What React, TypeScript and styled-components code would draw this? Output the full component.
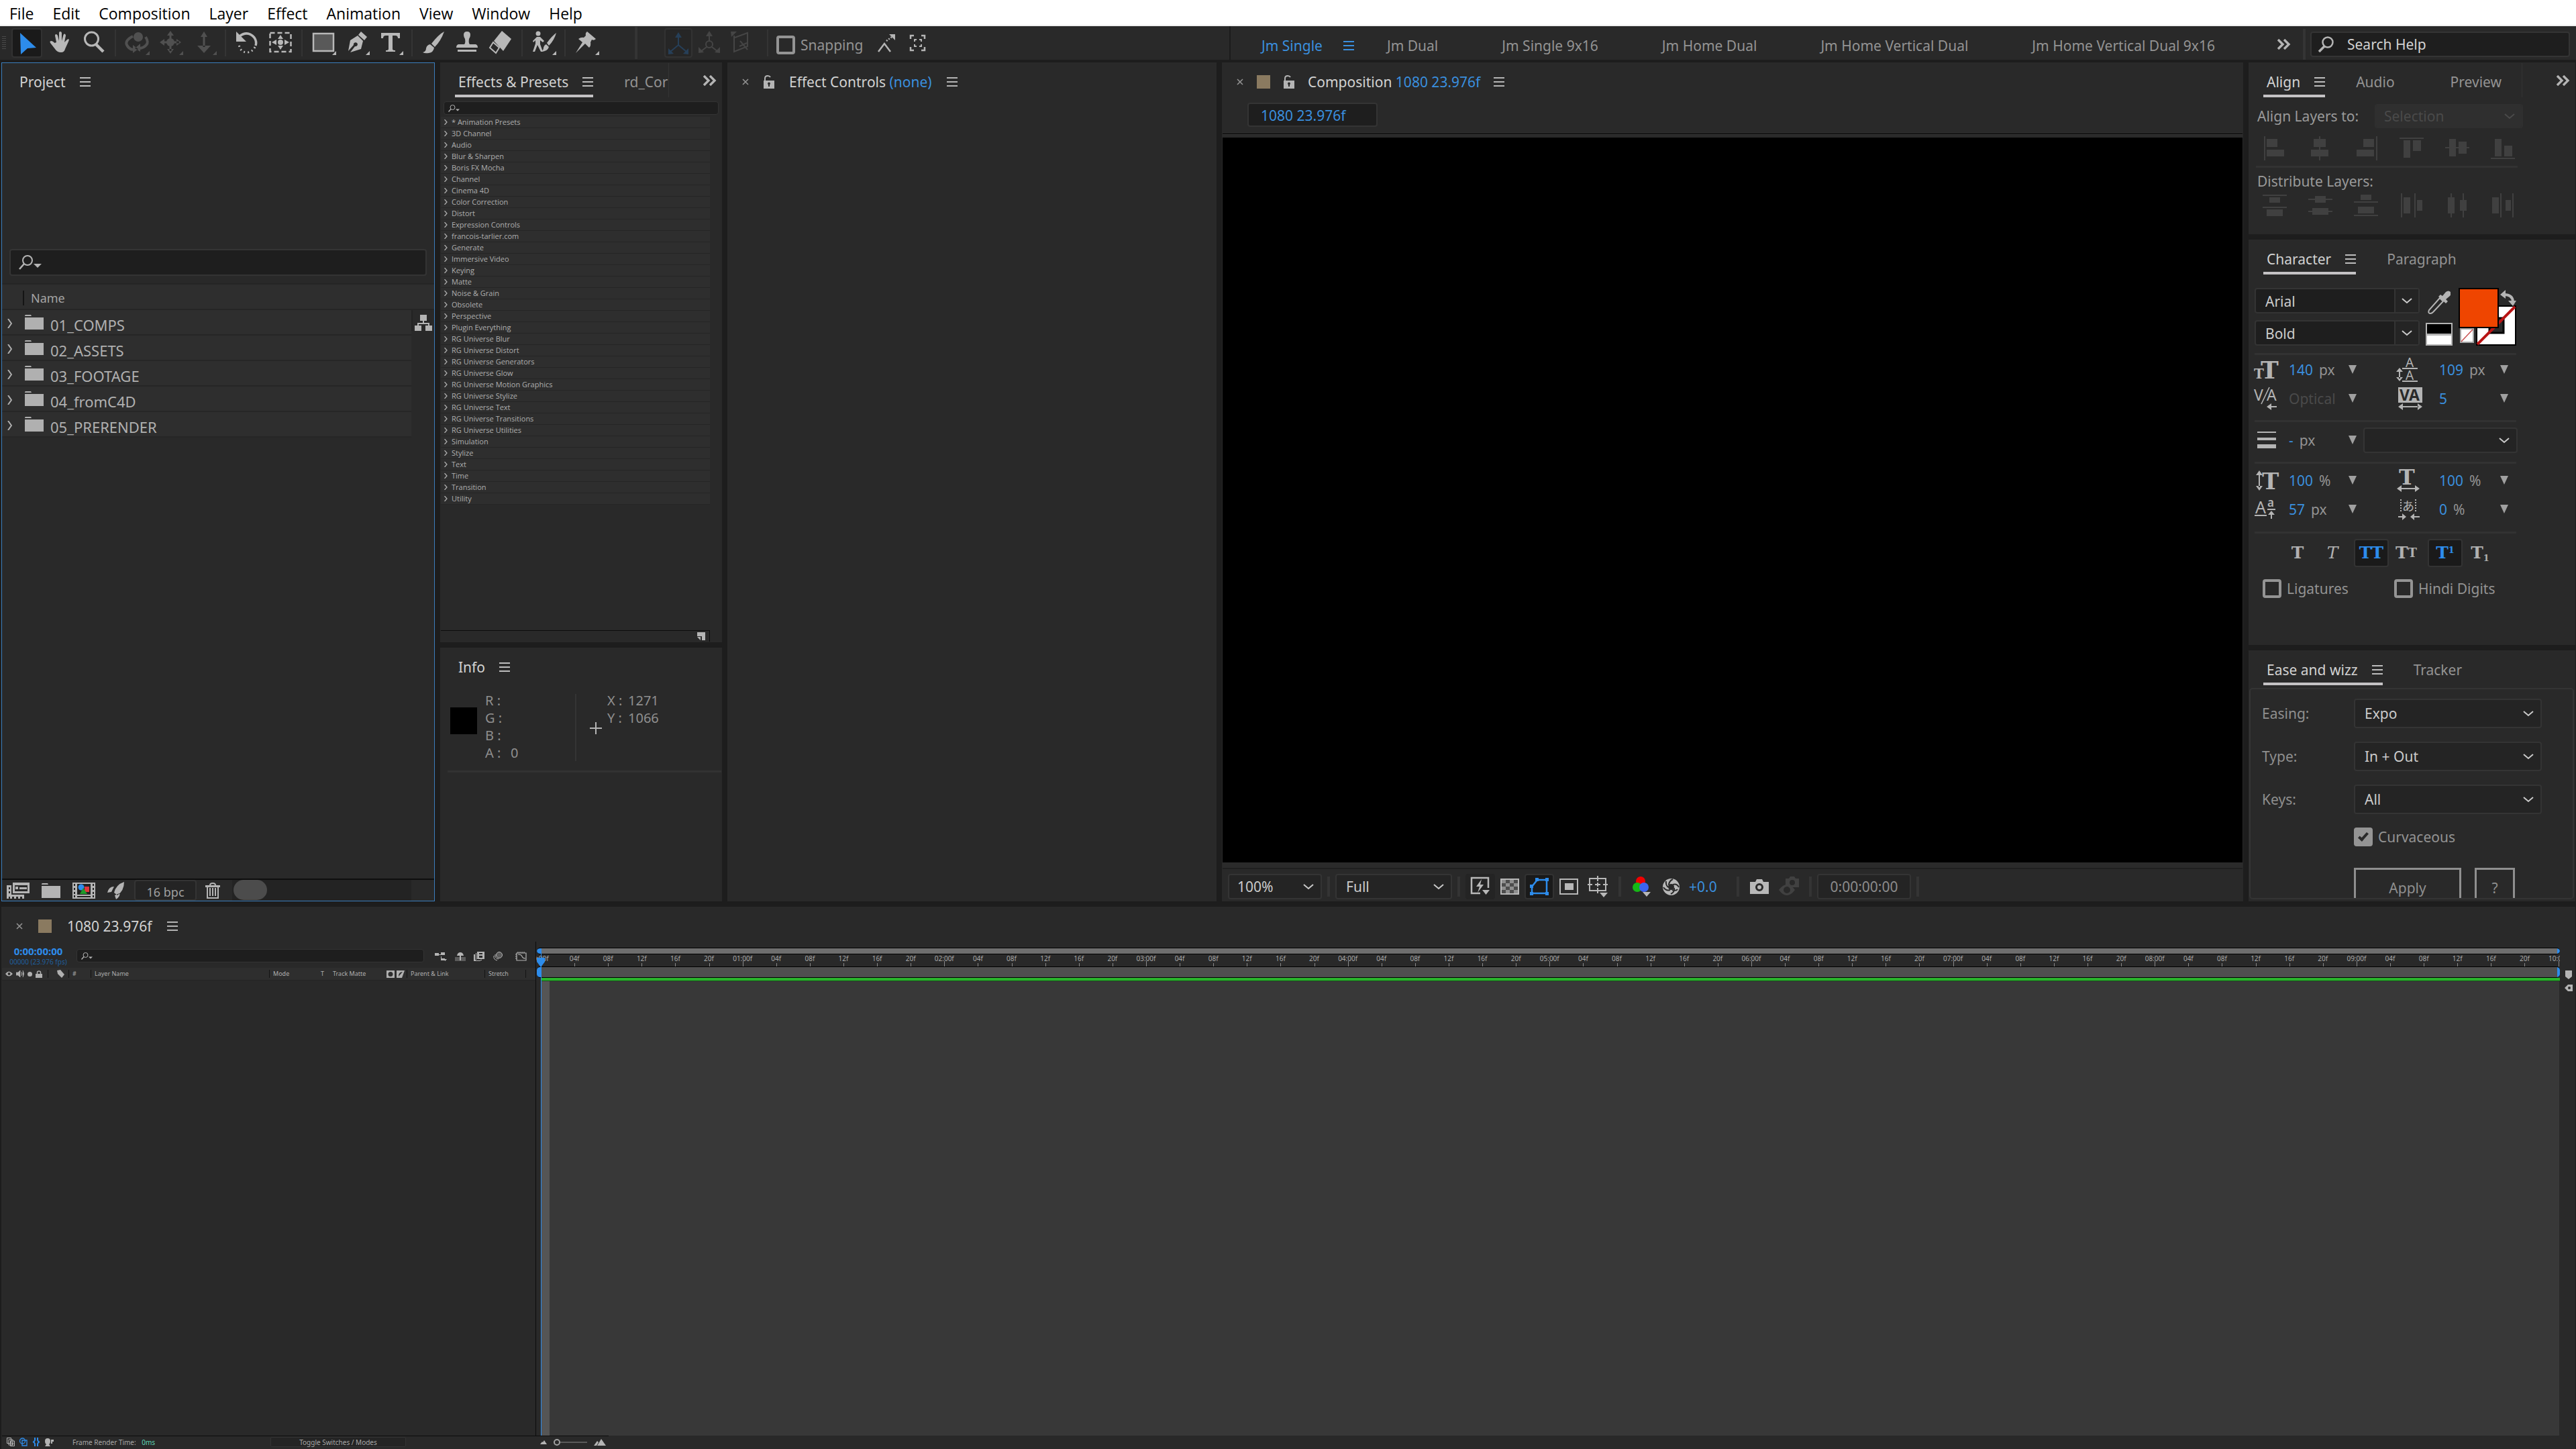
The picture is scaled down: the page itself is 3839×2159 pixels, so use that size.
import React from "react";
import styled, { createGlobalStyle, css } from "styled-components";

const c = {
  gutter: "#1d1d1d",
  panel: "#292929",
  row: "#2e2e2e",
  field: "#1e1e1e",
  select: "#242424",
  line: "#343434",
  bright: "#d2d2d2",
  text: "#b4b4b4",
  dim: "#939393",
  off: "#4a4a4a",
  blue: "#2d8ceb",
  blueText: "#3a8fdf",
  black: "#0c0c0c",
  label: "#8a7a60",
};

const GlobalStyle = createGlobalStyle`
  *, *::before, *::after { box-sizing: border-box; }
  body { margin: 0; background: ${c.gutter}; }
  body, button, input, select {
    font-family: "Noto Sans", "Open Sans", sans-serif;
    font-size: 21px;
    line-height: 28px;
  }
  button, input, select { margin: 0; padding: 0; border: 0; background: none; color: inherit; }
  ul { list-style: none; margin: 0; padding: 0; }
  svg { display: block; flex: none; }
`;

/* ---------- shared parts ---------- */

const Glyph = ({ w, h, children }: { w: number; h: number; children: React.ReactNode }) => (
  <svg width={w} height={h} viewBox={`0 0 ${w} ${h}`} fill="currentColor" aria-hidden="true">
    {children}
  </svg>
);

const Hamburger = () => (
  <Glyph w={16} h={14}>
    <path d="M0 0h16v2H0zM0 6h16v2H0zM0 12h16v2H0z" />
  </Glyph>
);
const More = () => (
  <Glyph w={20} h={16}>
    <path d="M1 1l7 7-7 7M10 1l7 7-7 7" fill="none" stroke="currentColor" strokeWidth="3.4" />
  </Glyph>
);
const Chevron = () => (
  <Glyph w={16} h={10}>
    <path d="M1 2l7 6 7-6" fill="none" stroke="currentColor" strokeWidth="2" />
  </Glyph>
);
const Arrow = () => (
  <Glyph w={12} h={13}>
    <path d="M0 0h12L6 13z" />
  </Glyph>
);
const CloseIcon = () => (
  <Glyph w={10} h={10}>
    <path d="M1 1l8 8M9 1L1 9" stroke="currentColor" strokeWidth="1.6" />
  </Glyph>
);
const LockOpen = () => (
  <Glyph w={16} h={20}>
    <path d="M2 9V5q0-4 4-4 3 0 4 2" fill="none" stroke="currentColor" strokeWidth="2" />
    <path fillRule="evenodd" d="M0 8h16v12H0zM8 10.5a2 2 0 0 0-1 3.7V17h2v-2.8a2 2 0 0 0-1-3.7z" />
  </Glyph>
);
const SearchDrop = ({ s = 1 }: { s?: number }) => (
  <svg width={34 * s} height={22 * s} viewBox="0 0 34 22" fill="currentColor" aria-hidden="true">
    <circle cx="13" cy="8" r="7" fill="none" stroke="currentColor" strokeWidth="2" />
    <path d="M8 13L1 21" stroke="currentColor" strokeWidth="2.6" />
    <path d="M22 13h12l-6 6z" />
  </svg>
);

const IconButton = styled.button`
  display: flex;
  align-items: center;
  justify-content: center;
  flex: none;
  color: ${c.text};
`;

const Panel = styled.section<{ $active?: boolean; $grow?: boolean }>`
  display: flex;
  flex-direction: column;
  min-width: 0;
  min-height: 0;
  overflow: hidden;
  background: ${c.panel};
  border: 1px solid ${(p) => (p.$active ? "#3b7ebd" : c.panel)};
  ${(p) => p.$grow && "flex: 1;"}
`;

const Stack = styled.div`
  display: flex;
  flex-direction: column;
  gap: 8px;
  min-width: 0;
  min-height: 0;
`;

const Head = styled.header<{ $plain?: boolean; $gap?: number }>`
  display: flex;
  flex: none;
  height: 51px;
  padding-left: 21px;
  ${(p) => p.$plain && css`
    align-items: center;
    gap: ${p.$gap ?? 20}px;
    padding-top: 5px;
  `}
`;
const Strip = styled.div<{ $cut?: boolean }>`
  display: flex;
  flex: 1;
  min-width: 0;
  overflow: hidden;
  gap: 41px;
  border-right: ${(p) => (p.$cut ? "1px solid #343434" : "0")};
`;
const Tab = styled.button<{ $on?: boolean; $bare?: boolean }>`
  display: flex;
  align-items: center;
  gap: 21px;
  flex: none;
  height: 51px;
  padding: 9px 0 0 5px;
  white-space: nowrap;
  color: ${(p) => (p.$on ? c.bright : c.dim)};
  border-bottom: 4px solid ${(p) => (p.$on && !p.$bare ? "#c4c2c4" : "transparent")};
  svg { color: #bdbdbd; visibility: ${(p) => (p.$on ? "visible" : "hidden")}; }
`;
const MoreButton = styled(IconButton)`
  width: 78px;
  height: 51px;
  padding: 0 7px 0 0;
  justify-content: flex-end;
  align-items: center;
`;

const Tabs = ({ names, more, bare }: { names: string[]; more?: boolean; bare?: boolean }) => (
  <Head>
    <Strip $cut={more} role="tablist">
      {names.map((n, i) => (
        <Tab key={n} $on={i === 0} $bare={bare} role="tab" aria-selected={i === 0}>
          {n}
          <Hamburger />
        </Tab>
      ))}
    </Strip>
    {more && (
      <MoreButton aria-label="More panels">
        <More />
      </MoreButton>
    )}
  </Head>
);

const Title = styled.h2`
  margin: 0;
  font-size: 21px;
  font-weight: 400;
  line-height: 28px;
  color: ${c.bright};
  white-space: nowrap;
  span { color: ${c.blueText}; }
`;
const Swatch = styled.span<{ $size: number; $color: string }>`
  flex: none;
  width: ${(p) => p.$size}px;
  height: ${(p) => p.$size}px;
  background: ${(p) => p.$color};
`;

const SearchField = styled.label<{ $small?: boolean }>`
  display: flex;
  align-items: center;
  gap: 12px;
  flex: none;
  height: ${(p) => (p.$small ? 20 : 40)}px;
  padding-left: ${(p) => (p.$small ? 6 : 12)}px;
  border: ${(p) => (p.$small ? 1 : 2)}px solid ${c.line};
  border-radius: 4px;
  background: ${c.field};
  color: ${c.text};
  input { flex: 1; min-width: 0; height: 100%; outline: 0; font-size: ${(p) => (p.$small ? 10 : 21)}px; line-height: 14px; }
  input::placeholder { color: ${c.bright}; opacity: 1; }
`;

const SelectBox = styled.div<{ $w?: number; $h: number; $pad: number; $off?: boolean; $split?: boolean }>`
  display: grid;
  grid-template-columns: minmax(0, 1fr) auto;
  align-items: center;
  flex: none;
  width: ${(p) => (p.$w ? `${p.$w}px` : "auto")};
  height: ${(p) => p.$h}px;
  border: 2px solid ${(p) => (p.$off ? "#2f2f2f" : c.line)};
  border-radius: 4px;
  background: ${(p) => (p.$off ? "#2f2f2f" : p.$split ? c.field : c.select)};
  color: ${(p) => (p.$off ? c.off : "#cbcbcb")};
  select {
    grid-area: 1 / 1 / 2 / 3;
    appearance: none;
    width: 100%;
    height: 100%;
    padding-left: ${(p) => p.$pad}px;
    opacity: 1;
    color: inherit;
  }
  > span {
    grid-area: 1 / 2;
    display: flex;
    align-items: center;
    justify-content: center;
    pointer-events: none;
    width: 36px;
    height: 100%;
    ${(p) => p.$split && `border-left: 2px solid ${c.line}; background: ${c.select};`}
  }
`;
type DropProps = { label: string; value: string; w?: number; h: number; pad: number; off?: boolean; split?: boolean; id?: string };
const Drop = ({ label, value, w, h, pad, off, split, id }: DropProps) => (
  <SelectBox $w={w} $h={h} $pad={pad} $off={off} $split={split}>
    <select aria-label={label} disabled={off} id={id}>
      <option>{value}</option>
    </select>
    <span>
      <Chevron />
    </span>
  </SelectBox>
);

const Check = styled.label`
  display: flex;
  align-items: center;
  gap: 8px;
  color: ${c.dim};
  white-space: nowrap;
  input {
    appearance: none;
    flex: none;
    display: grid;
    place-items: center;
    width: 28px;
    height: 28px;
    border: 4px solid #949494;
    border-radius: 4px;
  }
  input:checked { background: #949494; }
  input:checked::after {
    content: "";
    width: 8px;
    height: 15px;
    margin-bottom: 4px;
    border: solid ${c.panel};
    border-width: 0 4px 4px 0;
    transform: rotate(42deg);
  }
`;

/* ---------- menu and tool bars ---------- */

const Shell = styled.div`
  display: grid;
  grid-template-rows: auto auto minmax(0, 1250fr) minmax(0, 816fr);
  height: 100vh;
  overflow: hidden;
  color: ${c.text};
`;
const MenuBar = styled.nav`
  display: flex;
  height: 39px;
  background: #fff;
  border-bottom: 2px solid #f0f0f0;
  button { padding: 3px 14px 0; color: #000; font-family: "Open Sans", "Noto Sans", sans-serif; font-size: 23px; }
`;
const ToolRow = styled.div`
  display: grid;
  grid-template-columns: 1832px minmax(0, 1fr) auto;
  height: 54px;
  border-bottom: 4px solid ${c.gutter};
  background: ${c.panel};
`;
const Tools = styled.div`
  display: flex;
  align-items: center;
  gap: 4px;
  padding-left: 3px;
`;
const Grip = styled.span`
  width: 6px;
  height: 20px;
  margin-right: 4px;
  background: repeating-linear-gradient(#4a4a4a 0 1px, transparent 1px 3px);
`;
const Tool = styled(IconButton)<{ $on?: boolean; $off?: boolean; $narrow?: boolean }>`
  width: ${(p) => (p.$narrow ? 42 : 46)}px;
  height: 44px;
  border-radius: 4px;
  border: 2px solid ${(p) => (p.$on ? "#323232" : "transparent")};
  background: ${(p) => (p.$on ? (p.$off ? "#262626" : "#1a1a1a") : "transparent")};
  color: ${(p) => (p.$off ? "#505050" : "#b8b8b8")};
  overflow: visible;
`;
const AxisSet = styled.div`
  display: flex;
  gap: 4px;
  margin-right: 11px;
`;
const Sep = styled.span<{ $bar?: boolean }>`
  flex: none;
  width: ${(p) => (p.$bar ? 4 : 2)}px;
  height: ${(p) => (p.$bar ? 48 : 40)}px;
  margin: 0 ${(p) => (p.$bar ? 36 : 4)}px 0 ${(p) => (p.$bar ? 45 : 4)}px;
  background: ${c.line};
`;
const Snap = styled(Check)`
  margin: 6px 14px 0 4px;
`;
const Workspaces = styled.nav`
  display: flex;
  align-items: center;
  gap: 95px;
  padding: 7px 0 0 46px;
  border-left: 2px solid #1c1c1c;
  min-width: 0;
  overflow: hidden;
  button { display: flex; align-items: center; gap: 31px; white-space: nowrap; color: ${c.dim}; flex: none; }
  button:first-child { color: ${c.blueText}; margin-right: -46px; }
`;
const HelpArea = styled.div`
  display: flex;
  align-items: center;
  padding: 4px 9px 0 0;
  gap: 7px;
  label { width: 387px; height: 38px; gap: 20px; padding-left: 9px; }
  > button { width: 31px; padding-right: 11px; height: 30px; }
`;
const HelpLine = styled.span`
  width: 4px;
  height: 46px;
  background: ${c.line};
`;

const corner = <path d="M42 34v6h-6z" />;
type ToolDef = { name: string; art: React.ReactNode; drop?: boolean; off?: boolean; on?: boolean };
const toolGroups: ToolDef[][] = [
  [
    { name: "Selection", on: true, art: <path d="M13 7l24 22-13 1-10 9z" fill={c.blue} /> },
    { name: "Hand", art: (
      <path d="M17 21l-2-10q0-2 1.5-2T19 11l2 8V7q0-2 1.8-2T25 7v12l2.5-9q.5-2 2-1.5t1.5 2.5L29 21l4-4q2-1.5 3 0l-1 3-5 11q-1 5-6 5-6 0-9-5l-7-9q-1.5-3 1.5-3 2 0 5 3z" />
    ) },
    { name: "Zoom", art: <><circle cx="19.5" cy="16" r="10" fill="none" stroke="currentColor" strokeWidth="3" /><path d="M26 24l11 11" stroke="currentColor" strokeWidth="4.5" /></> },
  ],
  [
    { name: "Orbit Camera", off: true, drop: true, art: <><circle cx="25" cy="13" r="7" /><path d="M17 12q-12 6-9 13 3 6 9 7M36 13q5 8 1 12-4 5-12 5" fill="none" stroke="currentColor" strokeWidth="4" /><path d="M17 25v12l8-6zM28 23v12l-8-5z" /></> },
    { name: "Pan Camera", off: true, drop: true, art: <><circle cx="23" cy="21" r="6" /><path d="M21.5 8h3v26h-3zM10 19.5h26v3H10zM23 4l5 7H18zM23 38l5-7H18zM7 21l7-5v10zM39 21l-7-5v10z" /></> },
    { name: "Dolly Camera", off: true, drop: true, art: <path d="M21.5 8h3v20h-3zM23 5l5 8H18zM23 37l10-11H13z" /> },
  ],
  [
    { name: "Rotation", art: <><path d="M12 12q12-9 22 2 4 6 2 12" fill="none" stroke="currentColor" strokeWidth="3.5" /><path d="M7 5v15h15z" /><path d="M35 28q-4 8-12 8-10 0-12-12" fill="none" stroke="currentColor" strokeWidth="3" strokeDasharray="2 4" /></> },
    { name: "Pan Behind", art: <><rect x="7.5" y="7" width="31" height="28" fill="none" stroke="currentColor" strokeWidth="2.5" strokeDasharray="7 4" /><circle cx="23" cy="21" r="4" /><path d="M23 10l4 6h-8zM23 32l4-6h-8zM10 21l7-4v8zM36 21l-7-4v8z" /></> },
  ],
  [
    { name: "Rectangle", drop: true, art: <rect x="8" y="8" width="30" height="26" fill="#595959" stroke="currentColor" strokeWidth="2.5" /> },
    { name: "Pen", drop: true, art: <path fillRule="evenodd" d="M29 5l9 8-4 5-9-8zM24 11l8 8-3 12-16 5 7-9a3 3 0 1 0-2-2l-8 9 3-16z" /> },
    { name: "Type", drop: true, art: <path d="M9 7h28v8h-3q0-4-4-4h-4v20q0 2 4 2v2H16v-2q4 0 4-2V11h-4q-4 0-4 4H9z" /> },
  ],
  [
    { name: "Brush", art: <path d="M39 5q-8 4-19 18l5 5q9-9 14-23zM18 24l6 5q-1 7-8 8-6 1-9-1 5-1 5-6 1-5 6-6z" /> },
    { name: "Clone Stamp", art: <path d="M23 5q5 0 5 5 0 3-2 6-1 6 1 8h9q3 1 3 5H7q0-4 3-5h9q2-2 1-8-2-3-2-6 0-5 5-5zM9 32h28v3H9z" /> },
    { name: "Eraser", art: <><path d="M25 4l14 12-12 18-14-15z" /><path d="M12 21l-5 8 9 8 5-8z" fill="none" stroke="currentColor" strokeWidth="2" /></> },
  ],
  [
    { name: "Roto Brush", drop: true, art: <><circle cx="15" cy="8" r="3.5" /><path d="M13 13h5l6 6-2 2-4-3v6l4 11h-3l-5-10-4 10H7l4-12v-5l-3 3-1-2z" /><path d="M42 7q-6 4-14 15l3 4q8-8 11-19zM27 24l4 4q-2 7-12 7 4-2 4-6 1-4 4-5z" /></> },
  ],
  [{ name: "Puppet Pin", drop: true, art: <path d="M24 5l13 11q-3 3-6 1l-2 4q1 5-2 8l-6-6L7 37l10-16-6-5q4-3 8-2l3-3q-1-4 2-6z" /> }],
];

const axisArt = [
  { name: "Local axis", color: "#263f58", art: <><path d="M18 8v14L6 32M18 22l12 10" fill="none" stroke="currentColor" strokeWidth="2" /><path d="M18 3l5 8H13zM3 36v-9l8 8zM33 36v-9l-8 8z" /></> },
  { name: "World axis", color: "#454545", art: <><circle cx="18" cy="21" r="5" fill="none" stroke="currentColor" strokeWidth="2" /><path d="M18 6v10M14 25l-9 7M22 25l9 7" fill="none" stroke="currentColor" strokeWidth="2" /><path d="M18 1l5 8H13zM2 34v-9l8 8zM34 34v-9l-8 8z" /></> },
  { name: "View axis", color: "#454545", art: <><path d="M9 8v24l20-8V4L10 11M18 16l11 13M28 19L17 24" fill="none" stroke="currentColor" strokeWidth="2" /><path d="M4 2h9l-8 8z" /></> },
];

const workspaces = ["Jm Single", "Jm Dual", "Jm Single 9x16", "Jm Home Dual", "Jm Home Vertical Dual", "Jm Home Vertical Dual 9x16"];

const TopBars = () => (
  <>
    <MenuBar>
      {["File", "Edit", "Composition", "Layer", "Effect", "Animation", "View", "Window", "Help"].map((m) => (
        <button key={m}>{m}</button>
      ))}
    </MenuBar>
    <ToolRow>
      <Tools>
        <Grip />
        {toolGroups.map((g, i) => (
          <React.Fragment key={i}>
            {i > 0 && <Sep />}
            {g.map((t) => (
              <Tool key={t.name} $on={t.on} $off={t.off} aria-label={t.name}>
                <Glyph w={46} h={44}>
                  {t.art}
                  {t.drop && corner}
                </Glyph>
              </Tool>
            ))}
          </React.Fragment>
        ))}
        <Sep $bar />
        <AxisSet>
          {axisArt.map((a, i) => (
            <Tool key={a.name} $on={i === 0} $off $narrow aria-label={a.name}>
              <svg width="36" height="38" viewBox="0 0 36 38" fill="currentColor" color={a.color}>
                {a.art}
              </svg>
            </Tool>
          ))}
        </AxisSet>
        <Sep />
        <Snap>
          <input type="checkbox" />
          Snapping
        </Snap>
        <IconButton aria-label="Snap edges">
          <Glyph w={36} h={28}>
            <path d="M5 27l9-12 9 12" fill="none" stroke="currentColor" strokeWidth="2.5" />
            <path d="M17 11l8-6" stroke="currentColor" strokeWidth="2.5" strokeDasharray="2 2" />
            <path d="M21 1h9v9z" />
          </Glyph>
        </IconButton>
        <IconButton aria-label="Snap features">
          <Glyph w={46} h={26}>
            <path d="M13 7V2h5M29 2h5v5M34 19v5h-5M18 24h-5v-5" fill="none" stroke="currentColor" strokeWidth="2.5" />
            <path d="M19 11V8h3M26 8h3v3M29 15v3h-3M22 18h-3v-3" fill="none" stroke="currentColor" strokeWidth="2" />
          </Glyph>
        </IconButton>
      </Tools>
      <Workspaces>
        {workspaces.map((w, i) => (
          <button key={w}>
            {w}
            {i === 0 && <Hamburger />}
          </button>
        ))}
      </Workspaces>
      <HelpArea>
        <IconButton aria-label="More workspaces">
          <More />
        </IconButton>
        <HelpLine />
        <SearchField>
          <Glyph w={24} h={24}>
            <circle cx="15" cy="9" r="7.5" fill="none" stroke="currentColor" strokeWidth="2.5" />
            <path d="M10 15l-8 8" stroke="currentColor" strokeWidth="3.5" />
          </Glyph>
          <input aria-label="Search Help" placeholder="Search Help" />
        </SearchField>
      </HelpArea>
    </ToolRow>
  </>
);

/* ---------- project ---------- */

const Workbench = styled.main`
  display: grid;
  grid-template-columns: 646px 420px 729px minmax(0, 1fr) 487px;
  gap: 8px;
  padding: 0 1px 0 2px;
  min-height: 0;
`;
const ProjectSearch = styled(SearchField)`
  margin: 226px 11px 11px;
`;
const ColumnHead = styled.div`
  display: flex;
  align-items: center;
  height: 40px;
  padding: 4px 0 0 31px;
  background: ${c.row};
  border-top: 2px solid #252525;
  border-bottom: 2px solid #252525;
  font-size: 18px;
  line-height: 22px;
  color: #a4a4a4;
  span { border-left: 2px solid #141414; padding-left: 10px; }
`;
const ProjectBody = styled.div`
  display: grid;
  grid-template-columns: minmax(0, 1fr) 34px;
  flex: 1;
  align-items: start;
  > button { padding-top: 7px; border-left: 2px solid #232323; }
`;
const ProjectRow = styled.button`
  display: flex;
  align-items: center;
  width: 100%;
  height: 38px;
  padding: 8px 0 0 8px;
  border-bottom: 2px solid #262626;
  background: ${c.row};
  color: #b0b0b0;
  font-size: 22px;
  svg:first-child { margin: 0 19px 4px 0; }
  svg + svg { margin: 0 10px 8px 0; }
`;
const ProjectFoot = styled.footer`
  display: flex;
  align-items: center;
  height: 33px;
  padding-left: 7px;
  border-top: 2px solid #0e0e0e;
  > button { margin-right: 18px; }
`;
const Depth = styled.button`
  width: 93px;
  height: 31px;
  border: 2px solid ${c.line};
  border-radius: 4px;
  background: ${c.select};
  color: #a0a0a0;
  font-size: 18px;
  padding-top: 4px;
  line-height: 22px;
  && { margin: 0 13px 0 -3px; }
`;
const Track = styled.div`
  flex: 1;
  margin-right: 34px;
  height: 31px;
  background: #232323;
  span { display: block; width: 50px; height: 30px; margin-left: 2px; border-radius: 15px; background: #4c4c4c; }
`;
const Folder = () => (
  <Glyph w={28} h={22}>
    <path d="M0 1l1-1h8l1 2H0zM0 4h28v18H0z" />
  </Glyph>
);

const Project = () => (
  <Panel $active>
    <Tabs names={["Project"]} bare />
    <ProjectSearch>
      <SearchDrop />
      <input aria-label="Search project" />
    </ProjectSearch>
    <ColumnHead>
      <span>Name</span>
    </ColumnHead>
    <ProjectBody>
      <ul>
        {["01_COMPS", "02_ASSETS", "03_FOOTAGE", "04_fromC4D", "05_PRERENDER"].map((f) => (
          <li key={f}>
            <ProjectRow>
              <Glyph w={7} h={14}>
                <path d="M1 0l5 7-5 7" fill="none" stroke="currentColor" strokeWidth="2" />
              </Glyph>
              <Folder />
              {f}
            </ProjectRow>
          </li>
        ))}
      </ul>
      <IconButton aria-label="Project flowchart">
        <Glyph w={26} h={24}>
          <path d="M8 0h10v9h-4v3h8v4h4v8H16v-8h4v-2H6v2h4v8H0v-8h4v-4h8V9H8z" />
        </Glyph>
      </IconButton>
    </ProjectBody>
    <ProjectFoot>
      <IconButton aria-label="Interpret Footage">
        <Glyph w={34} h={24}>
          <path fillRule="evenodd" d="M9 0h25v16H9zM12 4v9h19V4zM13 6h4v4h-4zM19 7h11v3H19z" />
          <path fillRule="evenodd" d="M0 4h7v14h19v6h-3v-3h-3v3h-3v-3h-3v3h-3v-3H8v3H5v-3H3v3H0zM3 7v3h2V7zM3 13v3h2v-3z" />
        </Glyph>
      </IconButton>
      <IconButton aria-label="New Folder">
        <Folder />
      </IconButton>
      <IconButton aria-label="New Composition">
        <Glyph w={34} h={24}>
          <rect width="34" height="24" />
          <path d="M2 2h2v3H2zM2 8h2v3H2zM2 14h2v3H2zM2 19h2v3H2zM30 2h2v3h-2zM30 8h2v3h-2zM30 14h2v3h-2zM30 19h2v3h-2zM7 2h20v16H7zM7 20h20v2H7z" fill="#222" />
          <rect x="18" y="6" width="7" height="8" fill="#e0353c" />
          <circle cx="13" cy="7" r="4.5" fill="#2d8ceb" />
          <path d="M16 8l6 9H11z" fill="#1f9a2a" />
        </Glyph>
      </IconButton>
      <IconButton aria-label="Project Settings">
        <Glyph w={25} h={26}>
          <path d="M25 0q-12 4-15 16l5 4Q25 13 25 0zM10 7q-8 0-10 9l6-1zM18 17q2 4-5 9l-2-6z" />
        </Glyph>
      </IconButton>
      <Depth>16 bpc</Depth>
      <IconButton aria-label="Delete">
        <Glyph w={22} h={24}>
          <path d="M7 4q0-3 4-3t4 3" fill="none" stroke="currentColor" strokeWidth="2" />
          <path fillRule="evenodd" d="M0 4h22v3h-2v17H2V7H0zM4 7v15h14V7zM6 8h2v12H6zM10 8h2v12h-2zM14 8h2v12h-2z" />
        </Glyph>
      </IconButton>
      <Track>
        <span />
      </Track>
    </ProjectFoot>
  </Panel>
);

/* ---------- effects, info ---------- */

const effects = [
  "* Animation Presets", "3D Channel", "Audio", "Blur & Sharpen", "Boris FX Mocha", "Channel", "Cinema 4D",
  "Color Correction", "Distort", "Expression Controls", "francois-tarlier.com", "Generate", "Immersive Video",
  "Keying", "Matte", "Noise & Grain", "Obsolete", "Perspective", "Plugin Everything", "RG Universe Blur",
  "RG Universe Distort", "RG Universe Generators", "RG Universe Glow", "RG Universe Motion Graphics",
  "RG Universe Stylize", "RG Universe Text", "RG Universe Transitions", "RG Universe Utilities", "Simulation",
  "Stylize", "Text", "Time", "Transition", "Utility",
];
const EffectsPanel = styled(Panel)`
  flex: 0 0 864px;
`;
const EffectSearch = styled(SearchField)`
  margin: 6px 4px 3px;
`;
const EffectList = styled.ul`
  flex: 1;
  margin-right: 17px;
`;
const EffectRow = styled.button`
  display: flex;
  align-items: center;
  gap: 6px;
  width: 100%;
  height: 17px;
  padding-left: 5px;
  border-bottom: 1px solid #252525;
  background: ${c.row};
  color: #aeaeae;
  font-family: "Open Sans", "Noto Sans", sans-serif;
  font-size: 11px;
  line-height: 16px;
`;
const EffectFoot = styled.footer`
  display: flex;
  justify-content: flex-end;
  height: 17px;
  margin-right: 17px;
  padding: 2px 6px 0 0;
  border: solid ${c.black};
  border-width: 1px 1px 0 0;
  button { height: 12px; }
`;
const InfoBody = styled.div`
  display: flex;
  margin: 14px 0 13px 14px;
  > span:first-child { margin-top: 23px; }
`;
const Readout = styled.dl<{ $w: number; $label: number }>`
  display: grid;
  grid-template-columns: ${(p) => p.$label}px auto;
  grid-auto-rows: 26px;
  align-content: start;
  width: ${(p) => p.$w}px;
  margin: 0 0 0 12px;
  color: #8f8f8f;
  font-size: 20px;
  line-height: 26px;
  dt, dd { margin: 0; white-space: nowrap; }
`;
const InfoBar = styled.span`
  width: 2px;
  height: 100px;
  margin-top: 3px;
  background: ${c.line};
`;
const Cross = styled.span`
  margin: 45px -4px 0 20px;
  color: ${c.text};
`;
const Rule = styled.hr`
  flex: none;
  width: auto;
  height: 3px;
  margin: 0;
  border: 0;
  background: #323232;
`;
const InfoRule = styled(Rule)`
  margin-left: 10px;
`;

const EffectsColumn = () => (
  <Stack>
    <EffectsPanel>
      <Tabs names={["Effects & Presets", "rd_Cor"]} more />
      <EffectSearch $small>
        <SearchDrop s={0.5} />
        <input aria-label="Search effects" />
      </EffectSearch>
      <EffectList>
        {effects.map((e) => (
          <li key={e}>
            <EffectRow>
              <Glyph w={5} h={8}>
                <path d="M.5 0l3.500 4-3.500 4" fill="none" stroke="currentColor" strokeWidth="1.3" />
              </Glyph>
              {e}
            </EffectRow>
          </li>
        ))}
      </EffectList>
      <EffectFoot>
        <IconButton aria-label="New animation preset">
          <Glyph w={12} h={12}>
            <path d="M0 0h12v12H7V6H0zM0 7h5v5z" />
          </Glyph>
        </IconButton>
      </EffectFoot>
    </EffectsPanel>
    <Panel $grow>
      <Tabs names={["Info"]} bare />
      <InfoBody>
        <Swatch $size={40} $color="#000" />
        <Readout $w={134} $label={38}>
          <dt>R :</dt>
          <dd />
          <dt>G :</dt>
          <dd />
          <dt>B :</dt>
          <dd />
          <dt>A :</dt>
          <dd>0</dd>
        </Readout>
        <InfoBar />
        <Cross>
          <Glyph w={18} h={18}>
            <path d="M8 0h2v8h8v2h-8v8H8v-8H0V8h8z" />
          </Glyph>
        </Cross>
        <Readout $w={150} $label={31}>
          <dt>X :</dt>
          <dd>1271</dd>
          <dt>Y :</dt>
          <dd>1066</dd>
        </Readout>
      </InfoBody>
      <InfoRule />
    </Panel>
  </Stack>
);

/* ---------- effect controls, composition ---------- */

const CloseButton = styled(IconButton)`
  width: 10px;
  color: ${c.dim};
`;
const Chip = styled.button`
  align-self: flex-start;
  flex: none;
  min-width: 194px;
  height: 36px;
  margin: 8px 0 10px 37px;
  padding: 2px 18px 0;
  border: 2px solid ${c.line};
  border-radius: 4px;
  background: ${c.field};
  color: ${c.blueText};
  text-align: left;
`;
const Canvas = styled.div`
  flex: 1;
  min-height: 0;
  border-top: 4px solid ${c.panel};
  background: #000;
`;
const CanvasRule = styled.div`
  flex: none;
  height: 2px;
  background: #3a3a3a;
  border-top: 1px solid #000;
`;
const ViewBar = styled.footer`
  display: flex;
  flex: none;
  align-items: center;
  height: 57px;
  padding: 15px 0 0 8px;
  background: linear-gradient(#2b2b2b 8px, #202020 8px 10px, transparent 10px);
  > span { margin: 0 8px; height: 30px; width: 4px; }
`;
const ViewTool = styled(IconButton)<{ $on?: boolean; $well?: boolean; $off?: boolean }>`
  width: 44px;
  height: 38px;
  border-radius: 4px;
  border: 2px solid ${(p) => (p.$on ? "#323232" : "transparent")};
  background: ${(p) => (p.$on ? "#1a1a1a" : p.$well ? "#242424" : "transparent")};
  color: ${(p) => (p.$off ? "#414141" : p.$on ? c.blue : "#b8b8b8")};
`;
const Exposure = styled.button`
  width: 68px;
  padding-left: 5px;
  text-align: left;
  color: ${c.blueText};
`;
const Timecode = styled.button`
  width: 140px;
  height: 38px;
  border: 2px solid ${c.line};
  border-radius: 4px;
  background: ${c.select};
  color: #8c8c8c;
`;

const Composition = () => (
  <Panel>
    <Head $plain>
      <CloseButton aria-label="Close composition">
        <CloseIcon />
      </CloseButton>
      <Swatch $size={20} $color={c.label} />
      <LockOpen />
      <Title>
        Composition <span>1080 23.976f</span>
      </Title>
      <Hamburger />
    </Head>
    <Chip>1080 23.976f</Chip>
    <CanvasRule />
    <Canvas />
    <ViewBar>
      <Drop label="Magnification" value="100%" w={140} h={38} pad={12} />
      <Sep />
      <Drop label="Resolution" value="Full" w={174} h={38} pad={14} />
      <Sep />
      <ViewTool $well aria-label="Fast Previews">
        <Glyph w={30} h={30}>
          <path d="M15 25H2V2h25v15" fill="none" stroke="currentColor" strokeWidth="2.5" />
          <path d="M17 4L9 15h5l-3 9 9-12h-5zM18 20h11l-5.500 7z" />
        </Glyph>
      </ViewTool>
      <ViewTool aria-label="Toggle Transparency Grid">
        <Glyph w={28} h={24}>
          <rect width="28" height="24" />
          <path d="M2 2h24v20H2z" fill="#4d4d4d" />
          <path d="M2 2h6v5H2zM14 2h6v5h-6zM8 7h6v5H8zM20 7h6v5h-6zM2 12h6v5H2zM14 12h6v5h-6zM8 17h6v5H8zM20 17h6v5h-6z" fill="#8f8f8f" />
        </Glyph>
      </ViewTool>
      <ViewTool $on aria-label="Toggle Mask Visibility">
        <Glyph w={30} h={26}>
          <path d="M4 23V13l8-10h14v20z" fill="none" stroke="currentColor" strokeWidth="2.5" />
          <path d="M9 0h5v5H9zM24 0h5v5h-5zM24 21h5v5h-5zM1 21h5v5H1zM1 10h5v5H1z" />
        </Glyph>
      </ViewTool>
      <ViewTool aria-label="Region of Interest">
        <Glyph w={28} h={24}>
          <path d="M1 1h26v22H1z" fill="none" stroke="currentColor" strokeWidth="2" />
          <path d="M8 7h13v10H8z" />
        </Glyph>
      </ViewTool>
      <ViewTool aria-label="Grid and Guides">
        <Glyph w={32} h={32}>
          <path d="M3 4h24v18H3z" fill="none" stroke="currentColor" strokeWidth="2" />
          <path d="M15 0v8M15 18v8M0 13h7M23 13h7M11 13h8M15 10v6" stroke="currentColor" strokeWidth="2" />
          <path d="M18 25h12l-6 7z" />
        </Glyph>
      </ViewTool>
      <Sep />
      <ViewTool aria-label="Show Channel">
        <Glyph w={28} h={30}>
          <circle cx="13" cy="7" r="7" fill="#f00000" />
          <circle cx="8" cy="16" r="7" fill="#16b616" />
          <circle cx="18" cy="16" r="7" fill="#3d63f0" />
          <path d="M16 23h12l-6 7z" />
        </Glyph>
      </ViewTool>
      <ViewTool aria-label="Reset Exposure">
        <Glyph w={25} h={25}>
          <circle cx="12.5" cy="12.5" r="12.5" />
          <circle cx="12.5" cy="12.5" r="4.5" fill={c.panel} />
          <path d="M9 10Q9 4 15 1M15 9q6-2 9 4M17 14q1 6-5 9M11 17q-6 2-10-4M8 13Q4 9 5 4M14 17q6 2 8-1" fill="none" stroke={c.panel} strokeWidth="2" />
        </Glyph>
      </ViewTool>
      <Exposure>+0.0</Exposure>
      <Sep />
      <ViewTool aria-label="Take Snapshot">
        <Glyph w={28} h={22}>
          <path fillRule="evenodd" d="M0 4h8l2-4h8l2 4h8v18H0zM14 6a6 6 0 1 0 0 12 6 6 0 0 0 0-12zM14 9a3 3 0 1 1 0 6 3 3 0 0 1 0-6z" />
        </Glyph>
      </ViewTool>
      <ViewTool $off aria-label="Show Snapshot">
        <Glyph w={30} h={30}>
          <path fillRule="evenodd" d="M10 3h5l2-3h6l2 3h5v13H19q-6-5-9 0zM20 5a4 4 0 1 0 0 8 4 4 0 0 0 0-8z" />
          <path fillRule="evenodd" d="M0 20q6-8 12-8t12 8q-6 8-12 8T0 20zM12 15a5 5 0 1 0 0 10 5 5 0 0 0 0-10z" />
        </Glyph>
      </ViewTool>
      <Sep />
      <Timecode>0:00:00:00</Timecode>
      <Sep />
    </ViewBar>
  </Panel>
);

/* ---------- right column ---------- */

const AlignPanel = styled(Panel)`
  flex: 0 0 256px;
`;
const AlignBody = styled.div`
  width: 408px;
  padding: 10px 0 0 10px;
  color: #9a9a9a;
`;
const AlignTo = styled.label`
  display: flex;
  align-items: center;
  justify-content: space-between;
  margin: 0 0 12px 2px;
  white-space: nowrap;
`;
const AlignLabel = styled.div`
  margin: 6px 0 4px 2px;
`;
const AlignGrid = styled.div`
  display: flex;
  gap: 32px;
  padding-left: 10px;
  margin-bottom: 8px;
  button { color: #404040; }
`;
const AlignRule = styled(Rule)`
  width: 390px;
`;
const alignPaths = [
  "M2 0h2v36H2zM6 4h16v12H6zM6 20h26v10H6z",
  "M16 0h2v36h-2zM8 4h18v12H8zM4 20h26v10H4z",
  "M33 0h2v36h-2zM14 4h16v12H14zM4 20h26v10H4z",
  "M0 2h36v2H0zM6 6h10v26H6zM20 6h12v16H20z",
  "M0 16h36v2H0zM6 4h10v26H6zM20 8h12v18H20z",
  "M0 32h36v2H0zM6 4h10v26H6zM20 14h12v16H20z",
];
const distributePaths = [
  "M0 2h36v2H0zM0 20h36v2H0zM10 6h16v8H10zM6 24h24v10H6z",
  "M0 8h36v2H0zM0 26h36v2H0zM10 4h16v10H10zM6 22h24v10H6z",
  "M0 12h36v2H0zM0 32h36v2H0zM10 2h16v8H10zM6 20h24v10H6z",
  "M2 0h2v36H2zM22 0h2v36h-2zM6 6h10v24H6zM26 10h8v16h-8z",
  "M8 0h2v36H8zM26 0h2v36h-2zM4 6h10v24H4zM22 10h10v16H22z",
  "M14 0h2v36h-2zM32 0h2v36h-2zM2 6h10v24H2zM22 10h8v16h-8z",
];
const AlignIcons = ({ name, paths }: { name: string; paths: string[] }) => (
  <AlignGrid>
    {paths.map((d, i) => (
      <IconButton key={d} aria-label={`${name} ${i + 1}`} disabled>
        <Glyph w={36} h={36}>
          <path d={d} />
        </Glyph>
      </IconButton>
    ))}
  </AlignGrid>
);

const Align = () => (
  <AlignPanel>
    <Tabs names={["Align", "Audio", "Preview"]} more />
    <AlignBody>
      <AlignTo>
        Align Layers to:
        <Drop label="Align Layers to" value="Selection" w={221} h={36} pad={12} off />
      </AlignTo>
      <AlignIcons name="Align" paths={alignPaths} />
      <AlignRule />
      <AlignLabel>Distribute Layers:</AlignLabel>
      <AlignIcons name="Distribute" paths={distributePaths} />
    </AlignBody>
  </AlignPanel>
);

const CharPanel = styled(Panel)`
  flex: 0 0 604px;
`;
const CharBody = styled.div`
  width: 400px;
  padding: 20px 0 0 8px;
`;
const FontRow = styled.div`
  display: grid;
  grid-template-columns: 246px 40px 86px;
  column-gap: 9px;
  margin-bottom: 11px;
`;
const FontCol = styled.div`
  display: flex;
  flex-direction: column;
  justify-content: space-between;
  align-items: stretch;
  height: 86px;
  select { padding-top: 2px; }
`;
const CharSection = styled.div<{ $top: number; $bottom: number }>`
  display: grid;
  grid-template-columns: 51px 89px 70px 65px 91px 24px;
  grid-auto-rows: 43px;
  align-items: center;
  width: 390px;
  padding: ${(p) => p.$top}px 0 ${(p) => p.$bottom}px;
  border-top: 3px solid #323232;
  svg { overflow: visible; }
`;
const Value = styled.span<{ $off?: boolean }>`
  display: flex;
  gap: 9px;
  color: ${(p) => (p.$off ? c.off : c.dim)};
  button { color: ${c.blueText}; }
`;
const ArrowButton = styled(IconButton)`
  justify-content: flex-start;
  color: #a0a0a0;
`;
const StyleRow = styled.div`
  display: flex;
  align-items: center;
  width: 390px;
  padding: 8px 0 0 38px;
  border-top: 3px solid #323232;
`;
const StyleButton = styled(IconButton)<{ $on?: boolean; $gap?: number }>`
  width: 52px;
  height: 42px;
  margin-left: ${(p) => p.$gap ?? 0}px;
  border: 2px solid ${(p) => (p.$on ? "#333" : "transparent")};
  border-radius: 4px;
  background: ${(p) => (p.$on ? "#1a1a1a" : "transparent")};
  color: ${(p) => (p.$on ? c.blue : "#b0b0b0")};
  font-family: "DejaVu Serif", "Liberation Serif", serif;
  font-size: 25px;
  font-weight: 700;
  line-height: 30px;
  small { font-size: 18px; }
  sup, sub { font-size: 13px; line-height: 13px; }
  sup { align-self: flex-start; padding-top: 8px; }
  sub { align-self: flex-end; padding-bottom: 5px; }
  i { font-weight: 400; }
`;
const CheckRow = styled.div`
  display: grid;
  grid-template-columns: 196px auto;
  padding: 18px 0 0 12px;
`;

const serif = { fontFamily: '"DejaVu Serif", "Liberation Serif", serif', fontWeight: 700 };
const SizeIcon = () => (
  <Glyph w={38} h={32}>
    <text x="9" y="29" fontSize="36" {...serif}>T</text>
    <text x="-1" y="29" fontSize="20" {...serif}>T</text>
  </Glyph>
);
const LeadingIcon = () => (
  <Glyph w={34} h={36}>
    <text x="15" y="14" fontSize="19" fontFamily="Noto Sans">A</text>
    <text x="15" y="33" fontSize="19" fontFamily="Noto Sans">A</text>
    <path d="M10 15h23v2H10zM10 34h23v2H10zM5 19h2v12H5zM6 15l5 6H1zM6 35l5-6H1z" />
  </Glyph>
);
const KernIcon = () => (
  <Glyph w={36} h={36}>
    <text x="-1" y="21" fontSize="23" fontFamily="Noto Sans">V</text>
    <text x="18" y="21" fontSize="23" fontFamily="Noto Sans">A</text>
    <path d="M22 1L10 26" stroke="currentColor" strokeWidth="1.6" />
    <path d="M24 29h9v2h-9zM18 30l7-5v10z" />
  </Glyph>
);
const TrackIcon = () => (
  <Glyph w={40} h={36}>
    <rect x="4" y="1" width="36" height="23" />
    <text x="6" y="21" fontSize="23" fontFamily="Noto Sans" fontWeight="700" fill={c.panel}>VA</text>
    <path d="M10 29h24v2H10zM4 30l7-5v10zM40 30l-7-5v10z" />
  </Glyph>
);
const StrokeIcon = () => (
  <Glyph w={34} h={28}>
    <path d="M4 1h28v2H4zM4 10h28v4H4zM4 20h28v6H4z" />
  </Glyph>
);
const VScaleIcon = () => (
  <Glyph w={38} h={32}>
    <text x="11" y="29" fontSize="34" {...serif}>T</text>
    <path d="M6 6h2v20H6zM7 1l5 7H2zM7 31l5-7H2z" />
  </Glyph>
);
const HScaleIcon = () => (
  <Glyph w={38} h={36}>
    <text x="5" y="24" fontSize="32" {...serif}>T</text>
    <path d="M9 29h20v2H9zM2 30l7-5v10zM36 30l-7-5v10z" />
  </Glyph>
);
const BaselineIcon = () => (
  <Glyph w={34} h={32}>
    <text x="1" y="22" fontSize="25" fontFamily="Noto Sans">A</text>
    <text x="19" y="12" fontSize="17" fontFamily="Noto Sans" fontWeight="600">a</text>
    <path d="M0 24h18v2H0zM19 15h12v2H19zM24 22h2v8h-2zM25 18l5 6H20z" />
  </Glyph>
);
const TsumeIcon = () => (
  <Glyph w={38} h={34}>
    <text x="10" y="19" fontSize="18" fontFamily="Noto Sans CJK JP">あ</text>
    <path d="M8 2v20M30 2v20" stroke="currentColor" strokeWidth="2" strokeDasharray="2 2" />
    <path d="M4 27h6v2H4zM10 23l6 5-6 5zM28 27h8v2h-8zM28 23l-6 5 6 5z" />
  </Glyph>
);

const NumberValue = ({ v, unit, off }: { v?: string; unit?: string; off?: boolean }) => (
  <Value $off={off}>
    {v && <button>{v}</button>}
    {unit}
  </Value>
);
const MenuArrow = ({ of }: { of: string }) => (
  <ArrowButton aria-label={`${of} presets`}>
    <Arrow />
  </ArrowButton>
);
const StrokeDrop = styled.div`
  grid-column: 4 / 7;
  margin: 0 -2px 0 -48px;
`;

const Character = () => (
  <CharPanel>
    <Tabs names={["Character", "Paragraph"]} />
    <CharBody>
      <FontRow>
        <FontCol>
          <Drop label="Font family" value="Arial" h={38} pad={14} split />
          <Drop label="Font style" value="Bold" h={38} pad={14} split />
        </FontCol>
        <FontCol>
          <IconButton aria-label="Eyedropper">
            <Glyph w={34} h={40}>
              <path d="M4 38q-4 0-2-5L18 15l5 5L8 36q-2 2-4 2z" fill="none" stroke="currentColor" strokeWidth="2" />
              <path d="M16 13l3-3 3 2 5-6q4-3 7 0 2 3-1 6l-6 5 3 3-3 3z" />
            </Glyph>
          </IconButton>
          <IconButton aria-label="Black and white">
            <Glyph w={40} h={34}>
              <rect width="40" height="34" fill="#b4b4b4" />
              <path d="M2 2h36v14H2z" fill="#000" />
              <path d="M2 19h36v13H2z" fill="#fff" />
            </Glyph>
          </IconButton>
        </FontCol>
        <IconButton aria-label="Fill and stroke colors">
          <Glyph w={86} h={86}>
            <path d="M27 27h58v58H27z" fill="#fff" stroke="#000" strokeWidth="2" />
            <path d="M46 45h21v22H46z" fill="#292929" stroke="#000" strokeWidth="3" />
            <path d="M28 84L84 28" stroke="#b81414" strokeWidth="4" />
            <path d="M1 1h58v58H1z" fill="#ef4500" stroke="#000" strokeWidth="2" />
            <path d="M3 61h19v20H3z" fill="#fff" stroke="#a8a8a8" strokeWidth="2" />
            <path d="M4 80l17-18" stroke="#c85050" strokeWidth="1.5" />
            <path d="M68 10q12 0 13 10" fill="none" stroke="currentColor" strokeWidth="4" />
            <path d="M62 10l8-7v13zM74 19h12l-5 8z" />
          </Glyph>
        </IconButton>
      </FontRow>
      <CharSection $top={0} $bottom={11}>
        <SizeIcon />
        <NumberValue v="140" unit="px" />
        <MenuArrow of="Font size" />
        <LeadingIcon />
        <NumberValue v="109" unit="px" />
        <MenuArrow of="Leading" />
        <KernIcon />
        <NumberValue unit="Optical" off />
        <MenuArrow of="Kerning" />
        <TrackIcon />
        <NumberValue v="5" />
        <MenuArrow of="Tracking" />
      </CharSection>
      <CharSection $top={5} $bottom={11}>
        <StrokeIcon />
        <NumberValue v="-" unit="px" />
        <MenuArrow of="Stroke width" />
        <StrokeDrop>
          <Drop label="Stroke order" value="" h={38} pad={12} />
        </StrokeDrop>
      </CharSection>
      <CharSection $top={3} $bottom={12}>
        <VScaleIcon />
        <NumberValue v="100" unit="%" />
        <MenuArrow of="Vertical scale" />
        <HScaleIcon />
        <NumberValue v="100" unit="%" />
        <MenuArrow of="Horizontal scale" />
        <BaselineIcon />
        <NumberValue v="57" unit="px" />
        <MenuArrow of="Baseline shift" />
        <TsumeIcon />
        <NumberValue v="0" unit="%" />
        <MenuArrow of="Tsume" />
      </CharSection>
      <StyleRow>
        <StyleButton>T</StyleButton>
        <StyleButton>
          <i>T</i>
        </StyleButton>
        <StyleButton $on $gap={6}>TT</StyleButton>
        <StyleButton>
          T<small>T</small>
        </StyleButton>
        <StyleButton $on $gap={6}>
          T<sup>1</sup>
        </StyleButton>
        <StyleButton>
          T<sub>1</sub>
        </StyleButton>
      </StyleRow>
      <CheckRow>
        <Check>
          <input type="checkbox" />
          Ligatures
        </Check>
        <Check>
          <input type="checkbox" />
          Hindi Digits
        </Check>
      </CheckRow>
    </CharBody>
  </CharPanel>
);

const EaseFrame = styled.div`
  flex: 1;
  min-height: 0;
  overflow: hidden;
  margin: 4px 1px 2px 0;
  padding: 14px 46px 0 17px;
  border: 2px solid ${c.line};
  border-radius: 5px;
`;
const EaseRow = styled.div`
  display: grid;
  grid-template-columns: 137px 280px;
  align-items: center;
  height: 44px;
  margin-bottom: 20px;
  color: #8f8f8f;
`;
const EaseActions = styled.div`
  display: flex;
  gap: 20px;
  margin: 32px 0 0 137px;
`;
const EaseCheck = styled(Check)`
  margin-left: 137px;
`;
const PushButton = styled.button<{ $w: number }>`
  width: ${(p) => p.$w}px;
  height: 60px;
  border: 3px solid #8f8f8f;
  color: #8f8f8f;
`;

const Ease = () => (
  <Panel $grow>
    <Tabs names={["Ease and wizz", "Tracker"]} />
    <EaseFrame>
      {[["Easing", "Expo"], ["Type", "In + Out"], ["Keys", "All"]].map(([l, v]) => (
        <EaseRow key={l}>
          <label htmlFor={l}>{l}:</label>
          <Drop id={l} label={l} value={v} w={280} h={44} pad={14} />
        </EaseRow>
      ))}
      <EaseCheck>
        <input type="checkbox" defaultChecked />
        Curvaceous
      </EaseCheck>
      <EaseActions>
        <PushButton $w={160}>Apply</PushButton>
        <PushButton $w={60}>?</PushButton>
      </EaseActions>
    </EaseFrame>
  </Panel>
);

/* ---------- timeline ---------- */

const TimelinePanel = styled(Panel)`
  margin: 8px 1px 0 2px;
`;
const TimelineBody = styled.div`
  display: grid;
  grid-template-columns: 796px minmax(0, 1fr) 22px;
  flex: 1;
  min-height: 0;
`;
const Layers = styled.div`
  border-right: 1px solid ${c.black};
`;
const LayerTools = styled.div`
  display: flex;
  align-items: flex-start;
  height: 39px;
  padding-top: 6px;
  label { width: 518px; margin-top: 5px; }
`;
const Clock = styled.button`
  width: 111px;
  padding-right: 3px;
  color: ${c.blue};
  font-size: 15px;
  font-weight: 700;
  line-height: 17px;
  small { display: block; font-size: 10px; font-weight: 400; line-height: 14px; color: #1f5f9e; white-space: nowrap; }
`;
const SwitchSet = styled.div`
  display: flex;
  gap: 12px;
  margin: 9px 0 0 16px;
`;
const LayerHead = styled.div`
  display: flex;
  align-items: center;
  height: 19px;
  border-bottom: 1px solid #242424;
  background: ${c.row};
  font-size: 9px;
  line-height: 12px;
  color: #b0b0b0;
`;
const LayerCell = styled.span<{ $w: number; $gap?: number; $open?: boolean }>`
  display: flex;
  align-items: center;
  gap: ${(p) => p.$gap ?? 4}px;
  flex: none;
  width: ${(p) => p.$w}px;
  height: 12px;
  padding-left: 5px;
  white-space: nowrap;
  border-right: 1px solid ${(p) => (p.$open ? "transparent" : "#141414")};
`;
const Time = styled.div`
  position: relative;
  display: flex;
  flex-direction: column;
  min-width: 0;
  padding-top: 9px;
  overflow: hidden;
`;
const Range = styled.div<{ $work?: boolean }>`
  flex: none;
  height: ${(p) => (p.$work ? 17 : 10)}px;
  margin-left: 1px;
  border: solid #000;
  border-width: 1px 0;
  background: linear-gradient(
    90deg,
    ${c.blue} 6px,
    #111 6px 7px,
    ${(p) => (p.$work ? "#4f4f4f" : "#6e6e6e")} 7px calc(100% - 4px),
    ${c.blue} calc(100% - 4px)
  );
  border-radius: 5px;
`;
const Ruler = styled.div`
  display: flex;
  flex: none;
  height: 18px;
  padding: 0 2px 0 7px;
`;
const Mark = styled.div<{ $big?: boolean; $last?: boolean }>`
  display: flex;
  flex-direction: column;
  justify-content: space-between;
  flex: ${(p) => (p.$last ? "0 0 0px" : "1 1 0")};
  min-width: 0;
  font-size: 10px;
  line-height: 13px;
  color: #a8a8a8;
  span { display: flex; justify-content: center; width: 0; height: 13px; white-space: nowrap; }
  i { width: 1px; height: ${(p) => (p.$big ? 8 : 5)}px; margin-top: ${(p) => (p.$big ? -4 : 0)}px; background: #8a8a8a; }
`;
const Cached = styled.div`
  flex: none;
  height: 5px;
  margin-left: 7px;
  background: #2ab42c;
  border-bottom: 1px solid #17501a;
`;
const Lane = styled.div`
  flex: 1;
  margin: 0 1px 0 7px;
  background: linear-gradient(90deg, #555 13px, #383838 13px);
`;
const Playhead = styled.div`
  position: absolute;
  top: 10px;
  bottom: 0;
  left: 1px;
  width: 12px;
  background: linear-gradient(${c.blue}, ${c.blue}) 6px 0 / 1px 100% no-repeat;
  svg { margin-top: 14px; }
`;
const Side = styled.div`
  padding: 43px 0 0 7px;
  color: ${c.text};
  svg { margin-bottom: 7px; }
`;
const TimelineFoot = styled.footer`
  display: flex;
  align-items: center;
  flex: none;
  height: 19px;
  padding-left: 7px;
  gap: 7px;
  background: linear-gradient(90deg, #0c0c0c, #0c0c0c) 0 0 / 904px 1px no-repeat;
  font-size: 10px;
  line-height: 14px;
  color: #a8a8a8;
  > span b { margin-left: 6px; font-weight: 400; color: #5fd6b4; }
`;
const FootIcon = styled(IconButton)<{ $on?: boolean }>`
  width: 12px;
  height: 14px;
  color: ${(p) => (p.$on ? c.blue : c.text)};
`;
const RenderTime = styled.span`
  width: 288px;
  margin-left: 22px;
`;
const Toggle = styled.button`
  width: 202px;
  height: 15px;
  border: 1px solid #333;
  border-radius: 2px;
  background: ${c.select};
  color: #a8a8a8;
  font-size: 10px;
  line-height: 12px;
`;
const ZoomSet = styled.label`
  display: flex;
  align-items: center;
  gap: 10px;
  margin-left: 193px;
  color: ${c.text};
  input {
    appearance: none;
    width: 50px;
    height: 10px;
    background: linear-gradient(#5a5a5a, #5a5a5a) 0 4px / 100% 2px no-repeat;
  }
  input::-webkit-slider-thumb {
    appearance: none;
    width: 10px;
    height: 10px;
    border: 2px solid #a0a0a0;
    border-radius: 50%;
    background: ${c.panel};
  }
`;

const marks = Array.from({ length: 61 }, (_, i) => {
  const sec = Math.floor(i / 6);
  const frame = (i % 6) * 4;
  if (frame) return `${String(frame).padStart(2, "0")}f`;
  return i === 0 ? "0:00f" : `${String(sec).padStart(2, "0")}:00f`;
});

const Timeline = () => (
  <TimelinePanel>
    <Head $plain $gap={23}>
      <CloseButton aria-label="Close timeline">
        <CloseIcon />
      </CloseButton>
      <Swatch $size={20} $color={c.label} />
      <Title>1080 23.976f</Title>
      <Hamburger />
    </Head>
    <TimelineBody>
      <Layers>
        <LayerTools>
          <Clock>
            0:00:00:00
            <small>00000 (23.976 fps)</small>
          </Clock>
          <SearchField $small>
            <SearchDrop s={0.5} />
            <input aria-label="Search layers" />
          </SearchField>
          <SwitchSet>
            <IconButton aria-label="Mini-Flowchart">
              <Glyph w={18} h={13}>
                <path d="M0 1h6v2h3V0h6v4H9v2h1v3h5v3H9V4H6v1H0zM13 10h5l-2.500 3z" />
              </Glyph>
            </IconButton>
            <IconButton aria-label="Hide Shy Layers">
              <Glyph w={16} h={13}>
                <path d="M0 7h16v6H0z" fill="#5b5b5b" />
                <path d="M3 5q1-5 5-5t5 5H9v7H7V5z" />
              </Glyph>
            </IconButton>
            <IconButton aria-label="Frame Blending">
              <Glyph w={16} h={14}>
                <path fillRule="evenodd" d="M5 0h11v11H5zM8 2v2h5V2zM8 6v3h5V6zM0 4h2v8h8v2H0zM3 2h1v10h8v1H3z" />
              </Glyph>
            </IconButton>
            <IconButton aria-label="Motion Blur">
              <Glyph w={16} h={14}>
                <circle cx="10" cy="5" r="4.5" fill="#5b5b5b" stroke="currentColor" />
                <path d="M4 4q-1 6 5 7M2 6q-1 6 5 7" fill="none" stroke="currentColor" />
              </Glyph>
            </IconButton>
            <IconButton aria-label="Graph Editor">
              <Glyph w={26} h={14}>
                <path d="M8 2h14v11H8zM10 4q5 0 6 3t5 3M10 0v2M13 0v2M16 0v2M19 0v2M6 4h2M6 7h2M6 10h2" fill="none" stroke="currentColor" strokeWidth="1.2" />
              </Glyph>
            </IconButton>
          </SwitchSet>
        </LayerTools>
        <LayerHead>
          <LayerCell $w={69} $gap={5}>
            <Glyph w={11} h={8}>
              <path fillRule="evenodd" d="M0 4q5-7 11 0-6 7-11 0zM5.500 2a2 2 0 1 0 0 4 2 2 0 0 0 0-4z" />
            </Glyph>
            <Glyph w={12} h={10}>
              <path d="M0 3h3l3-3v10L3 7H0zM8 2q2 3 0 6M10 0q3 5 0 10" stroke="currentColor" strokeWidth=".8" />
            </Glyph>
            <Glyph w={7} h={7}>
              <circle cx="3.5" cy="3.5" r="3.5" />
            </Glyph>
            <Glyph w={10} h={11}>
              <path d="M2.500 5V3Q2.500 1 5 1t2.500 2v2" fill="none" stroke="currentColor" strokeWidth="1.5" />
              <path d="M0 5h10v6H0z" />
            </Glyph>
          </LayerCell>
          <LayerCell $w={31} $gap={4}>
            <Glyph w={20} h={12}>
              <path d="M8 1l5-1 6 7-4 5-6-6z" />
            </Glyph>
          </LayerCell>
          <LayerCell $w={33}>#</LayerCell>
          <LayerCell $w={266}>Layer Name</LayerCell>
          <LayerCell $w={71} $open>Mode</LayerCell>
          <LayerCell $w={18} $open>T</LayerCell>
          <LayerCell $w={80} $open>Track Matte</LayerCell>
          <LayerCell $w={36} $gap={3}>
            <Glyph w={12} h={11}>
              <path fillRule="evenodd" d="M0 0h12v11H0zM6 2a3.500 3.500 0 1 0 0 7 3.500 3.500 0 0 0 0-7z" />
            </Glyph>
            <Glyph w={12} h={11}>
              <path fillRule="evenodd" d="M0 0h12L8 11H0zM3 9l6-7q-6 0-6 7z" />
            </Glyph>
          </LayerCell>
          <LayerCell $w={116}>Parent &amp; Link</LayerCell>
          <LayerCell $w={61}>Stretch</LayerCell>
        </LayerHead>
      </Layers>
      <Time>
        <Range />
        <Ruler>
          {marks.map((m, i) => (
            <Mark key={i} $big={i % 6 === 0} $last={i === 60}>
              <span>{m}</span>
              <i />
            </Mark>
          ))}
        </Ruler>
        <Range $work />
        <Cached />
        <Lane />
        <Playhead>
          <Glyph w={12} h={14}>
            <path d="M0 0h12v6l-6 8-6-8z" fill={c.blue} />
          </Glyph>
        </Playhead>
      </Time>
      <Side>
        <Glyph w={12} h={13}>
          <path d="M1 0h10v9l-5 4-5-4z" />
        </Glyph>
        <Glyph w={12} h={12}>
          <path fillRule="evenodd" d="M0 6l5-5h7v10H5zM7 4a2 2 0 1 0 0 4 2 2 0 0 0 0-4z" />
        </Glyph>
      </Side>
    </TimelineBody>
    <TimelineFoot>
      <FootIcon aria-label="Layer switches">
        <Glyph w={12} h={13}>
          <path d="M.5.5h6v8h-6zM3 3h6v8H3zM5.500 5h6v7.500h-6zM8.500 7v4M6.500 9h4" fill="none" stroke="currentColor" />
        </Glyph>
      </FootIcon>
      <FootIcon $on aria-label="Transfer controls">
        <Glyph w={12} h={13}>
          <circle cx="4.5" cy="5" r="4" fill="none" stroke="currentColor" strokeWidth="1.3" />
          <path d="M4 4h7v8H4z" fill="none" stroke="currentColor" strokeWidth="1.3" />
        </Glyph>
      </FootIcon>
      <FootIcon $on aria-label="In and out">
        <Glyph w={14} h={13}>
          <path d="M4 0h2v4L4.500 6.500 6 9v4H4V9L1.500 6.500 4 4zM10 0H8v4l1.500 2.500L8 9v4h2V9l2.500-2.500L10 4z" />
        </Glyph>
      </FootIcon>
      <FootIcon aria-label="Render time">
        <Glyph w={13} h={12}>
          <path d="M4 0q4 0 4 4T6 9l2 3H0l2-3Q0 8 0 4t4-4zM9 2h4v3h-2v3H9z" />
        </Glyph>
      </FootIcon>
      <RenderTime>
        Frame Render Time:<b> 0ms</b>
      </RenderTime>
      <Toggle>Toggle Switches / Modes</Toggle>
      <ZoomSet>
        <Glyph w={10} h={6}>
          <path d="M0 6l3-4 1 1 2-3 4 6z" />
        </Glyph>
        <input type="range" aria-label="Timeline zoom" min={0} max={100} defaultValue={0} />
        <Glyph w={18} h={10}>
          <path d="M0 10l5-7 2 2-3 5zM5 10l6-10 7 10z" />
        </Glyph>
      </ZoomSet>
    </TimelineFoot>
  </TimelinePanel>
);

export default function App() {
  return (
    <Shell>
      <GlobalStyle />
      <TopBars />
      <Workbench>
        <Project />
        <EffectsColumn />
        <Panel>
          <Head $plain $gap={22}>
            <CloseButton aria-label="Close effect controls">
              <CloseIcon />
            </CloseButton>
            <LockOpen />
            <Title>
              Effect Controls <span>(none)</span>
            </Title>
            <Hamburger />
          </Head>
        </Panel>
        <Composition />
        <Stack>
          <Align />
          <Character />
          <Ease />
        </Stack>
      </Workbench>
      <Timeline />
    </Shell>
  );
}
